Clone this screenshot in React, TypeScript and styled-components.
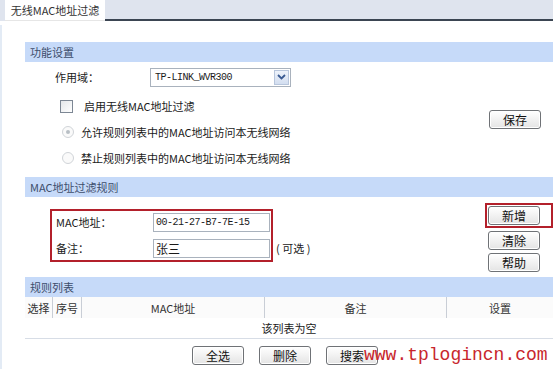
import React from 'react';
import styled, { createGlobalStyle } from 'styled-components';

const GlobalStyle = createGlobalStyle`
  html, body {
    margin: 0;
    padding: 0;
    background: #ffffff;
  }
  body {
    font-family: "Noto Sans CJK SC", "DejaVu Sans", sans-serif;
    font-size: 11px;
    color: #1a1a1a;
  }
`;

const Page = styled.div`
  position: relative;
  width: 553px;
  height: 369px;
  overflow: hidden;
  background: #fff;
`;

const TabBar = styled.div`
  display: flex;
  height: 21px;
  background: #dfe4ee;
  padding-left: 5px;
`;

const Tab = styled.div`
  width: 100px;
  background: #fff;
  display: flex;
  align-items: center;
  justify-content: center;
  font-size: 11px;
  color: #333;
  border-bottom: 1px solid #e6e6e6;
  white-space: nowrap;
`;

const TabRest = styled.div`
  flex: 1;
  border-bottom: 2px solid #3b4552;
`;

const Content = styled.div`
  border-left: 2px solid #e3ebf5;
  margin-top: 4px;
  padding: 17px 0 0 23px;
  height: 344px;
  box-sizing: border-box;
`;

const SectionHeader = styled.div`
  height: 20px;
  background: #c6daf9;
  color: #3d4d6b;
  font-size: 11px;
  display: flex;
  align-items: center;
  padding-left: 5px;
`;

const SettingsBody = styled.div`
  display: flex;
  height: 115px;
`;

const SettingsRows = styled.div`
  flex: 1;
  display: flex;
  flex-direction: column;
  padding-top: 4px;
`;

const Row = styled.div<{ $h: number; $pl: number; $pt?: number }>`
  box-sizing: border-box;
  height: ${p => p.$h}px;
  display: flex;
  align-items: center;
  padding-left: ${p => p.$pl}px;
  padding-top: ${p => p.$pt ?? 0}px;
  white-space: nowrap;
`;

const FieldLabel = styled.div<{ $w: number }>`
  width: ${p => p.$w}px;
`;

const Select = styled.div`
  width: 135px;
  height: 17px;
  border: 1px solid #a9b2bd;
  display: flex;
  align-items: center;
  justify-content: space-between;
  font-family: "Liberation Mono", monospace;
  font-size: 10px;
  letter-spacing: -0.5px;
  padding-left: 4px;
  box-sizing: content-box;
`;

const SelectArrow = styled.div`
  width: 15px;
  height: 15px;
  margin-right: 1px;
  background: linear-gradient(#eef3fb, #d3def0);
  border: 1px solid #b8c6dc;
  box-sizing: border-box;
  display: flex;
  align-items: center;
  justify-content: center;
`;

const Checkbox = styled.div`
  width: 11px;
  height: 11px;
  border: 1px solid #7d8794;
  background: linear-gradient(135deg, #e4e7ea, #fff);
  margin-right: 11px;
`;

const Radio = styled.div<{ $checked?: boolean }>`
  width: 10px;
  height: 10px;
  border-radius: 50%;
  border: 1px solid #d0d4d8;
  background: #fafafa;
  margin-right: 7px;
  display: flex;
  align-items: center;
  justify-content: center;
  &::after {
    content: '';
    width: 4px;
    height: 4px;
    border-radius: 50%;
    background: ${p => (p.$checked ? '#b8bec4' : 'transparent')};
  }
`;

const SideCol = styled.div<{ $w: number }>`
  width: ${p => p.$w}px;
  display: flex;
  flex-direction: column;
  align-items: flex-start;
  justify-content: center;
`;

const Button = styled.div<{ $w?: number }>`
  width: ${p => p.$w ?? 52}px;
  height: 19px;
  box-sizing: border-box;
  border: 1px solid #6f7276;
  border-radius: 3px;
  background: linear-gradient(#ffffff, #e4e4e4);
  display: flex;
  align-items: center;
  justify-content: center;
  font-size: 12px;
  color: #111;
  box-shadow: inset 0 0 0 1px #fff;
`;

const Highlight = styled.div`
  border: 2px solid #b3202b;
  padding: 1px;
`;

const RuleBody = styled.div`
  display: flex;
  height: 80px;
`;

const RuleLeft = styled.div`
  flex: 1;
  display: flex;
  align-items: flex-start;
  padding: 12px 0 0 25px;
`;

const RedBox = styled.div`
  width: 223px;
  height: 53px;
  box-sizing: border-box;
  border: 2px solid #b3202b;
  display: flex;
  flex-direction: column;
  justify-content: space-between;
  padding: 0 0 1px 4px;
`;

const BoxRow = styled.div`
  display: flex;
  align-items: center;
  height: 22px;
  white-space: nowrap;
`;

const TextInput = styled.div`
  width: 117px;
  height: 19px;
  box-sizing: border-box;
  border: 1px solid #a9b2bd;
  display: flex;
  align-items: center;
  padding-left: 2px;
  font-family: "Liberation Mono", monospace;
  font-size: 10px;
  letter-spacing: -0.5px;
`;

const InputCjk = styled.span`
  font-family: "Noto Sans CJK SC", sans-serif;
  font-size: 12px;
  letter-spacing: 0;
`;

const Optional = styled.div`
  margin-top: 31px;
  padding-left: 3px;
  white-space: nowrap;
`;

const ButtonStack = styled.div`
  width: 68px;
  display: flex;
  flex-direction: column;
  gap: 3px;
  padding-top: 6px;
`;

const StackItem = styled.div`
  padding-left: 3px;
`;

const Table = styled.div`
  display: grid;
  grid-template-columns: 28px 29px 183px 182px 1fr;
`;

const HeadCell = styled.div<{ $last?: boolean }>`
  height: 21px;
  display: flex;
  align-items: center;
  justify-content: center;
  color: #333;
  background: #fbfbfb;
  border-right: ${p => (p.$last ? 'none' : '1px solid #c9ced6')};
`;

const EmptyRow = styled.div`
  grid-column: 1 / -1;
  height: 20px;
  border-bottom: 1px solid #d7dde6;
  display: flex;
  align-items: center;
  justify-content: center;
`;

const FooterButtons = styled.div`
  display: flex;
  gap: 15px;
  padding: 7px 0 0 167px;
`;

const Watermark = styled.div`
  position: absolute;
  left: 364px;
  top: 343px;
  font-family: "Liberation Mono", monospace;
  font-size: 18px;
  line-height: 24px;
  color: #c8262c;
  white-space: nowrap;
`;

const App: React.FC = () => {
  return (
    <Page>
      <GlobalStyle />
      <TabBar>
        <Tab>无线MAC地址过滤</Tab>
        <TabRest />
      </TabBar>
      <Content>
        <SectionHeader>功能设置</SectionHeader>
        <SettingsBody>
          <SettingsRows>
            <Row $h={22} $pl={30}>
              <FieldLabel $w={95}>作用域：</FieldLabel>
              <Select>
                <span>TP-LINK_WVR300</span>
                <SelectArrow>
                  <svg width="9" height="6" viewBox="0 0 9 6">
                    <path d="M1 1 L4.5 4.5 L8 1" fill="none" stroke="#3a5a92" strokeWidth="1.8" />
                  </svg>
                </SelectArrow>
              </Select>
            </Row>
            <Row $h={31} $pl={35} $pt={5}>
              <Checkbox />
              启用无线MAC地址过滤
            </Row>
            <Row $h={26} $pl={37}>
              <Radio $checked />
              允许规则列表中的MAC地址访问本无线网络
            </Row>
            <Row $h={26} $pl={37}>
              <Radio />
              禁止规则列表中的MAC地址访问本无线网络
            </Row>
          </SettingsRows>
          <SideCol $w={64}>
            <Button>保存</Button>
          </SideCol>
        </SettingsBody>
        <SectionHeader>MAC地址过滤规则</SectionHeader>
        <RuleBody>
          <RuleLeft>
            <RedBox>
              <BoxRow>
                <FieldLabel $w={97}>MAC地址：</FieldLabel>
                <TextInput>00-21-27-B7-7E-15</TextInput>
              </BoxRow>
              <BoxRow>
                <FieldLabel $w={97}>备注：</FieldLabel>
                <TextInput>
                  <InputCjk>张三</InputCjk>
                </TextInput>
              </BoxRow>
            </RedBox>
            <Optional>( 可选 )</Optional>
          </RuleLeft>
          <ButtonStack>
            <Highlight>
              <Button>新增</Button>
            </Highlight>
            <StackItem>
              <Button>清除</Button>
            </StackItem>
            <StackItem>
              <Button>帮助</Button>
            </StackItem>
          </ButtonStack>
        </RuleBody>
        <SectionHeader>规则列表</SectionHeader>
        <Table>
          <HeadCell>选择</HeadCell>
          <HeadCell>序号</HeadCell>
          <HeadCell>MAC地址</HeadCell>
          <HeadCell>备注</HeadCell>
          <HeadCell $last>设置</HeadCell>
          <EmptyRow>该列表为空</EmptyRow>
        </Table>
        <FooterButtons>
          <Button>全选</Button>
          <Button>删除</Button>
          <Button>搜索</Button>
        </FooterButtons>
      </Content>
      <Watermark>www.tplogincn.com</Watermark>
    </Page>
  );
};

export default App;
